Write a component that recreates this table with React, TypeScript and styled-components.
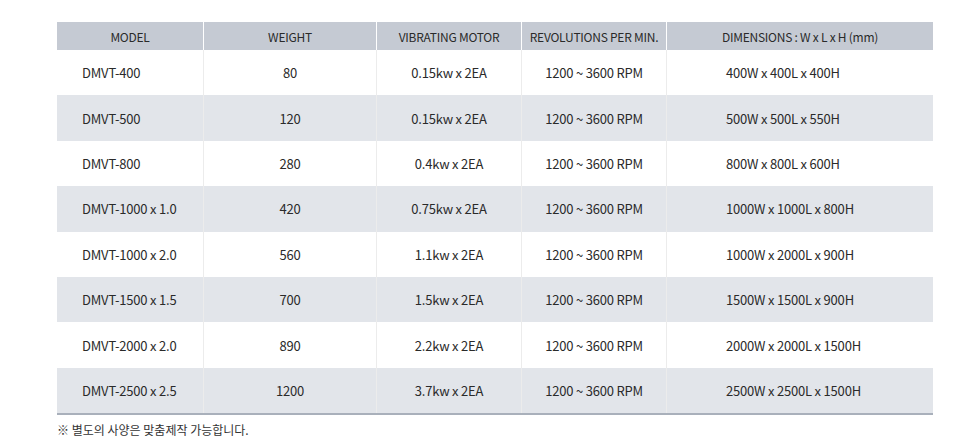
import React from "react";
import styled, { createGlobalStyle } from "styled-components";

const GlobalStyle = createGlobalStyle`
  body {
    margin: 0;
    background: #fff;
    font-family: "Noto Sans CJK KR", "Noto Sans", sans-serif;
    color: #333;
  }
`;

const Wrap = styled.div`
  padding: 22px 0 0 57px;
`;

const Table = styled.div`
  width: 876px;
  display: grid;
  grid-template-columns: 146px 173px 145px 145px 267px;
  grid-template-rows: 28px;
  grid-auto-rows: 45.4px;
  border-bottom: 2px solid #a9b0bb;
`;

const Head = styled.div`
  display: flex;
  align-items: center;
  justify-content: center;
  background: #c5cad3;
  border-left: 1px solid #fff;
  font-size: 12px;
  letter-spacing: -0.25px;
  color: #2a2a2a;
  &:first-child {
    border-left: 0;
  }
`;

const Cell = styled.div<{ $zebra: boolean; $align?: "left" | "center"; $pad?: number; $first?: boolean }>`
  display: flex;
  align-items: center;
  justify-content: ${(p) => (p.$align === "left" ? "flex-start" : "center")};
  padding-left: ${(p) => p.$pad ?? 0}px;
  background: ${(p) => (p.$zebra ? "#e2e5ea" : "#fff")};
  border-left: ${(p) => (p.$first ? "0" : "1px solid #ececec")};
  font-size: 13px;
  letter-spacing: -0.2px;
  color: #2a2a2a;
  white-space: nowrap;
`;

const Note = styled.p`
  margin: 8px 0 0;
  font-size: 12px;
  line-height: 13px;
  color: #333;
`;

const headers = [
  "MODEL",
  "WEIGHT",
  "VIBRATING MOTOR",
  "REVOLUTIONS PER MIN.",
  "DIMENSIONS : W x L x H  (mm)",
];

const rows = [
  ["DMVT-400", "80", "0.15kw x 2EA", "400W x 400L x 400H"],
  ["DMVT-500", "120", "0.15kw x 2EA", "500W x 500L x 550H"],
  ["DMVT-800", "280", "0.4kw x 2EA", "800W x 800L x 600H"],
  ["DMVT-1000 x 1.0", "420", "0.75kw x 2EA", "1000W x 1000L x 800H"],
  ["DMVT-1000 x 2.0", "560", "1.1kw x 2EA", "1000W x 2000L x 900H"],
  ["DMVT-1500 x 1.5", "700", "1.5kw x 2EA", "1500W x 1500L x 900H"],
  ["DMVT-2000 x 2.0", "890", "2.2kw x 2EA", "2000W x 2000L x 1500H"],
  ["DMVT-2500 x 2.5", "1200", "3.7kw x 2EA", "2500W x 2500L x 1500H"],
];

const App: React.FC = () => {
  return (
    <Wrap>
      <GlobalStyle />
      <Table>
        {headers.map((h) => (
          <Head key={h}>{h}</Head>
        ))}
        {rows.map((r, i) => {
          const zebra = i % 2 === 1;
          return (
            <React.Fragment key={r[0]}>
              <Cell $zebra={zebra} $first $align="left" $pad={25}>
                {r[0]}
              </Cell>
              <Cell $zebra={zebra}>{r[1]}</Cell>
              <Cell $zebra={zebra}>{r[2]}</Cell>
              <Cell $zebra={zebra}>1200 ~ 3600 RPM</Cell>
              <Cell $zebra={zebra} $align="left" $pad={59}>
                {r[3]}
              </Cell>
            </React.Fragment>
          );
        })}
      </Table>
      <Note>※ 별도의 사양은 맞춤제작 가능합니다.</Note>
    </Wrap>
  );
};

export default App;
